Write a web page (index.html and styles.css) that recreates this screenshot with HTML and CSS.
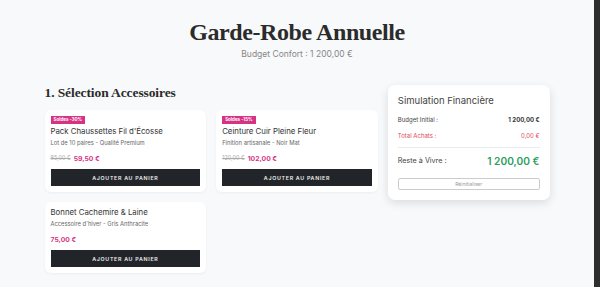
FILE: index.html
```html
<!DOCTYPE html>
<html lang="fr">
<head>
<meta charset="utf-8">
<title>Garde-Robe Annuelle</title>
<link rel="stylesheet" href="styles.css">
</head>
<body>
<header class="page-header">
  <h1 class="page-title">Garde-Robe Annuelle</h1>
  <p class="page-subtitle">Budget Confort : 1 200,00 €</p>
</header>
<div class="layout">
  <section class="main">
    <h2 class="section-title">1. Sélection Accessoires</h2>
    <div class="cards">
      <article class="card">
        <span class="badge">Soldes -30%</span>
        <h3 class="card-title">Pack Chaussettes Fil d'Écosse</h3>
        <p class="card-desc">Lot de 10 paires - Qualité Premium</p>
        <div class="price"><s class="old">85,00 €</s><span class="new">59,50 €</span></div>
        <button class="btn-add">AJOUTER AU PANIER</button>
      </article>
      <article class="card">
        <span class="badge">Soldes -15%</span>
        <h3 class="card-title">Ceinture Cuir Pleine Fleur</h3>
        <p class="card-desc">Finition artisanale - Noir Mat</p>
        <div class="price"><s class="old">120,00 €</s><span class="new">102,00 €</span></div>
        <button class="btn-add">AJOUTER AU PANIER</button>
      </article>
      <article class="card">
        <h3 class="card-title">Bonnet Cachemire &amp; Laine</h3>
        <p class="card-desc">Accessoire d'hiver - Gris Anthracite</p>
        <div class="price"><span class="new">75,00 €</span></div>
        <button class="btn-add">AJOUTER AU PANIER</button>
      </article>
    </div>
  </section>
  <aside class="sidebar">
    <h2 class="side-title">Simulation Financière</h2>
    <div class="row"><span>Budget Initial :</span><strong class="amount">1 200,00 €</strong></div>
    <div class="row row-red"><span>Total Achats :</span><span>0,00 €</span></div>
    <hr class="divider">
    <div class="row row-total"><span>Reste à Vivre :</span><strong class="green">1 200,00 €</strong></div>
    <button class="btn-reset">Réinitialiser</button>
  </aside>
</div>
</body>
</html>
```

FILE: styles.css
```css
html {
  background: #f8f9fa;
  min-height: 100%;
  border-right: 6px solid #2e2e2e;
}
body {
  margin: 0;
  padding: 0 0 24px;
  background: #f8f9fa;
  font-family: Inter, "Noto Sans", sans-serif;
  color: #333;
}

.page-header { text-align: center; padding-top: 18px; }
.page-title {
  margin: 0;
  font-family: "Liberation Serif", serif;
  font-weight: 700;
  font-size: 24px;
  line-height: 28px;
  letter-spacing: -0.4px;
  color: #2b2b2b;
}
.page-subtitle {
  margin: 3px 0 0;
  font-size: 8.5px;
  line-height: 10px;
  color: #888;
}

.layout {
  width: 505px;
  margin: 26px auto 0;
  display: grid;
  grid-template-columns: 1fr 1fr 1fr;
  gap: 10px;
  align-items: start;
}
.main { grid-column: span 2; }
.section-title {
  margin: 0 0 9px;
  font-family: "Liberation Serif", serif;
  font-weight: 700;
  font-size: 13.5px;
  line-height: 16px;
  letter-spacing: -0.1px;
  color: #2b2b2b;
}
.cards {
  display: grid;
  grid-template-columns: 1fr 1fr;
  gap: 10px;
  align-items: start;
}
.card {
  background: #fff;
  border-radius: 6px;
  box-shadow: 0 1px 3px rgba(0,0,0,0.05);
  padding: 6px;
  display: flex;
  flex-direction: column;
  align-items: flex-start;
}
.badge {
  background: #d63384;
  color: #fff;
  font-size: 4.5px;
  font-weight: 700;
  line-height: 8px;
  padding: 0 3px;
  margin-bottom: 3px;
}
.card-title {
  margin: 0 0 3px;
  font-size: 7.8px;
  font-weight: 400;
  line-height: 9px;
  color: #333;
}
.card-desc {
  margin: 0 0 7px;
  font-size: 5.8px;
  line-height: 8px;
  color: #666;
}
.price {
  display: flex;
  align-items: center;
  gap: 3px;
  line-height: 9px;
  margin-bottom: 6px;
}
.old { font-size: 5.5px; color: #aaa; }
.new { font-size: 6.8px; font-weight: 700; color: #d63384; }
.btn-add {
  align-self: stretch;
  height: 17px;
  border: 0;
  background: #212529;
  color: #eee;
  font-family: Inter, sans-serif;
  font-size: 5.3px;
  font-weight: 600;
  letter-spacing: 0.7px;
  padding: 0;
}

.sidebar {
  background: #fff;
  border-radius: 7px;
  box-shadow: 0 3px 10px rgba(0,0,0,0.12);
  padding: 10px;
  display: flex;
  flex-direction: column;
}
.side-title {
  margin: 0 0 10px;
  font-size: 9.5px;
  font-weight: 400;
  line-height: 11px;
  color: #444;
}
.row {
  display: flex;
  justify-content: space-between;
  align-items: center;
  font-size: 6px;
  line-height: 8px;
  color: #444;
}
.amount { color: #333; }
.row-red { color: #e04858; margin-top: 8px; }
.divider { border: 0; border-top: 1px solid #e9ecef; margin: 7px 0 6px; width: 100%; }
.row-total { font-size: 7.2px; line-height: 14px; color: #444; }
.green { font-size: 10.2px; font-weight: 600; color: #2c9f5f; }
.btn-reset {
  margin-top: 10px;
  height: 11.5px;
  background: #fff;
  border: 1px solid #ccc;
  border-radius: 2px;
  color: #999;
  font-family: Inter, sans-serif;
  font-size: 5px;
  padding: 0;
}
```
